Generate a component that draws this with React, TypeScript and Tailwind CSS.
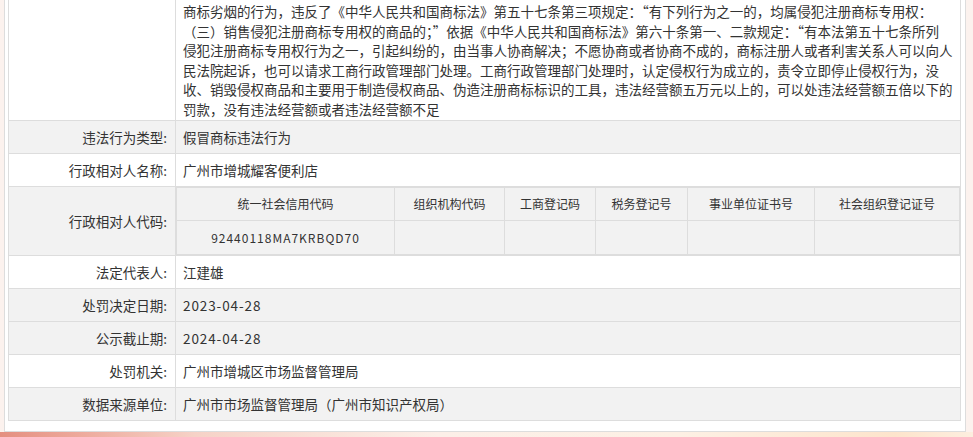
import React from "react";

const paraLines = [
  "商标劣烟的行为，违反了《中华人民共和国商标法》第五十七条第三项规定：“有下列行为之一的，均属侵犯注册商标专用权：",
  "（三）销售侵犯注册商标专用权的商品的；”依据《中华人民共和国商标法》第六十条第一、二款规定：“有本法第五十七条所列",
  "侵犯注册商标专用权行为之一，引起纠纷的，由当事人协商解决；不愿协商或者协商不成的，商标注册人或者利害关系人可以向人",
  "民法院起诉，也可以请求工商行政管理部门处理。工商行政管理部门处理时，认定侵权行为成立的，责令立即停止侵权行为，没",
  "收、销毁侵权商品和主要用于制造侵权商品、伪造注册商标标识的工具，违法经营额五万元以上的，可以处违法经营额五倍以下的",
  "罚款，没有违法经营额或者违法经营额不足",
];

function Row({
  label,
  value,
  gray,
  h = "h-[33px]",
  mono,
}: {
  label: string;
  value: string;
  gray?: boolean;
  h?: string;
  mono?: boolean;
}) {
  return (
    <div
      className={`flex border-b border-[#dddddd] ${h} ${gray ? "bg-[#f2f2f2]" : "bg-white"}`}
    >
      <div className="w-[167px] shrink-0 border-r border-[#dddddd] pr-[8px] flex items-center justify-end whitespace-nowrap">
        {label}
      </div>
      <div
        className={`flex-1 pl-[7px] flex items-center whitespace-nowrap ${mono ? "tracking-[0.9px]" : ""}`}
      >
        {value}
      </div>
    </div>
  );
}

const codeCols = [
  { title: "统一社会信用代码", w: "w-[218px]", v: "92440118MA7KRBQD70" },
  { title: "组织机构代码", w: "w-[110px]", v: "" },
  { title: "工商登记码", w: "w-[91px]", v: "" },
  { title: "税务登记号", w: "w-[92px]", v: "" },
  { title: "事业单位证书号", w: "w-[127px]", v: "" },
  { title: "社会组织登记证号", w: "w-[144px]", v: "" },
];

export default function App() {
  return (
    <div className="w-[973px] h-[437px] overflow-hidden bg-[#fcf2ee] flex flex-col font-['Noto_Sans_CJK_SC',sans-serif] text-[13.5px] text-[#333333]">
      <div className="ml-[4px] w-[962px] h-[432px] shrink-0 bg-white border-x border-b border-[#dddddd] pl-[3px] pr-[4px] pb-[4px]">
        <div className="w-[953px] border-x border-[#dddddd]">
          {/* top paragraph row */}
          <div className="flex border-b border-[#dddddd] h-[121px] bg-white">
            <div className="w-[167px] shrink-0 border-r border-[#dddddd]" />
            <div className="flex-1 pl-[7px] pt-[2px] leading-[19.5px] whitespace-nowrap overflow-hidden">
              {paraLines.map((l, i) => (
                <div key={i}>{l}</div>
              ))}
            </div>
          </div>
          <Row label="违法行为类型:" value="假冒商标违法行为" gray />
          <Row label="行政相对人名称:" value="广州市增城耀客便利店" />
          {/* code row */}
          <div className="flex border-b border-[#dddddd] h-[69px] bg-[#f2f2f2]">
            <div className="w-[167px] shrink-0 border-r border-[#dddddd] pr-[8px] flex items-center justify-end whitespace-nowrap">
              行政相对人代码:
            </div>
            <div className="flex-1">
              <div className="w-[784px] border border-[#dddddd] text-[12px]">
                <div className="flex h-[33px] border-b border-[#dddddd]">
                  {codeCols.map((c, i) => (
                    <div
                      key={i}
                      className={`${c.w} shrink-0 flex items-center justify-center whitespace-nowrap ${i < codeCols.length - 1 ? "border-r border-[#dddddd]" : ""}`}
                    >
                      {c.title}
                    </div>
                  ))}
                </div>
                <div className="flex h-[33px]">
                  {codeCols.map((c, i) => (
                    <div
                      key={i}
                      className={`${c.w} shrink-0 flex items-center justify-center whitespace-nowrap tracking-[1px] ${i < codeCols.length - 1 ? "border-r border-[#dddddd]" : ""}`}
                    >
                      {c.v}
                    </div>
                  ))}
                </div>
              </div>
            </div>
          </div>
          <Row label="法定代表人:" value="江建雄" />
          <Row label="处罚决定日期:" value="2023-04-28" gray mono />
          <Row label="公示截止期:" value="2024-04-28" gray mono />
          <Row label="处罚机关:" value="广州市增城区市场监督管理局" />
          <Row label="数据来源单位:" value="广州市市场监督管理局（广州市知识产权局）" gray />
        </div>
      </div>
      <div className="h-[5px] shrink-0 bg-[linear-gradient(to_right,#e48f80_0%,#eda99b_8%,#f6d2c7_20%,#fcefe8_45%,#fdf0e4_70%,#fde4cc_92%,#fdeedf_100%)]" />
    </div>
  );
}
